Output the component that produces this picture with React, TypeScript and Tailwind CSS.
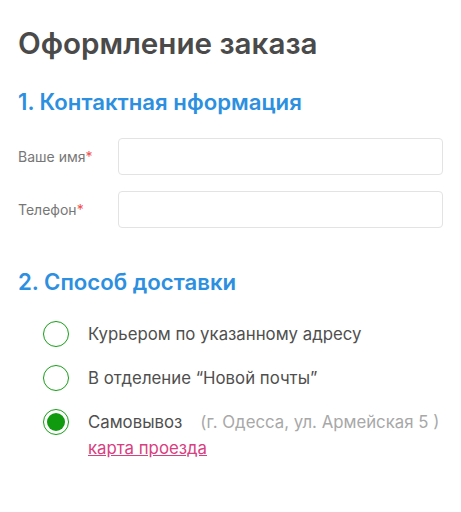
import React from "react";

const OPTIONS = [
  { label: "Курьером по указанному адресу", checked: false },
  { label: "В отделение “Новой почты”", checked: false },
  { label: "Самовывоз", checked: true, note: "(г. Одесса, ул. Армейская 5 )" },
];

function Radio({ checked }: { checked: boolean }) {
  return (
    <span className="flex h-[26px] w-[26px] shrink-0 items-center justify-center rounded-full border border-[#14a014] bg-white">
      {checked && <span className="h-[18px] w-[18px] rounded-full bg-[#0f9a0f]" />}
    </span>
  );
}

export default function App() {
  return (
    <div className="min-h-[512px] w-[461px] bg-white px-[18px] pt-[24px] font-['Inter','Noto_Sans',sans-serif]">
      <h1 className="text-[29.6px] font-semibold leading-[38px] text-[#4a4a4a]">Оформление заказа</h1>

      <h2 className="mt-[26px] text-[22.2px] font-semibold leading-[28px] text-[#2d8fe0]">
        1. Контактная нформация
      </h2>

      <div className="mt-[22px] flex flex-col gap-[16px]">
        {["Ваше имя", "Телефон"].map((l) => (
          <div key={l} className="flex items-center">
            <label className="w-[100px] text-[14px] text-[#777]">
              {l}
              <span className="text-[#f05050]">*</span>
            </label>
            <input className="h-[37px] w-[325px] rounded-[4px] border border-[#e3e3e3] bg-white outline-none" />
          </div>
        ))}
      </div>

      <h2 className="mt-[40px] text-[22.2px] font-semibold leading-[28px] text-[#2d8fe0]">2. Способ доставки</h2>

      <div className="mt-[25px] flex flex-col gap-[18px] pl-[25px]">
        {OPTIONS.map((o) => (
          <div key={o.label} className="flex items-start gap-[19px]">
            <Radio checked={o.checked} />
            <div className="pt-[2px] text-[16.8px] leading-[22px] text-[#4f4f4f]">
              <div>
                {o.label}
                {o.note && <span className="ml-[18px] text-[#a8a8a8]">{o.note}</span>}
              </div>
              {o.checked && (
                <a href="#" className="mt-[4px] block text-[#d8407f] underline">
                  карта проезда
                </a>
              )}
            </div>
          </div>
        ))}
      </div>
    </div>
  );
}
